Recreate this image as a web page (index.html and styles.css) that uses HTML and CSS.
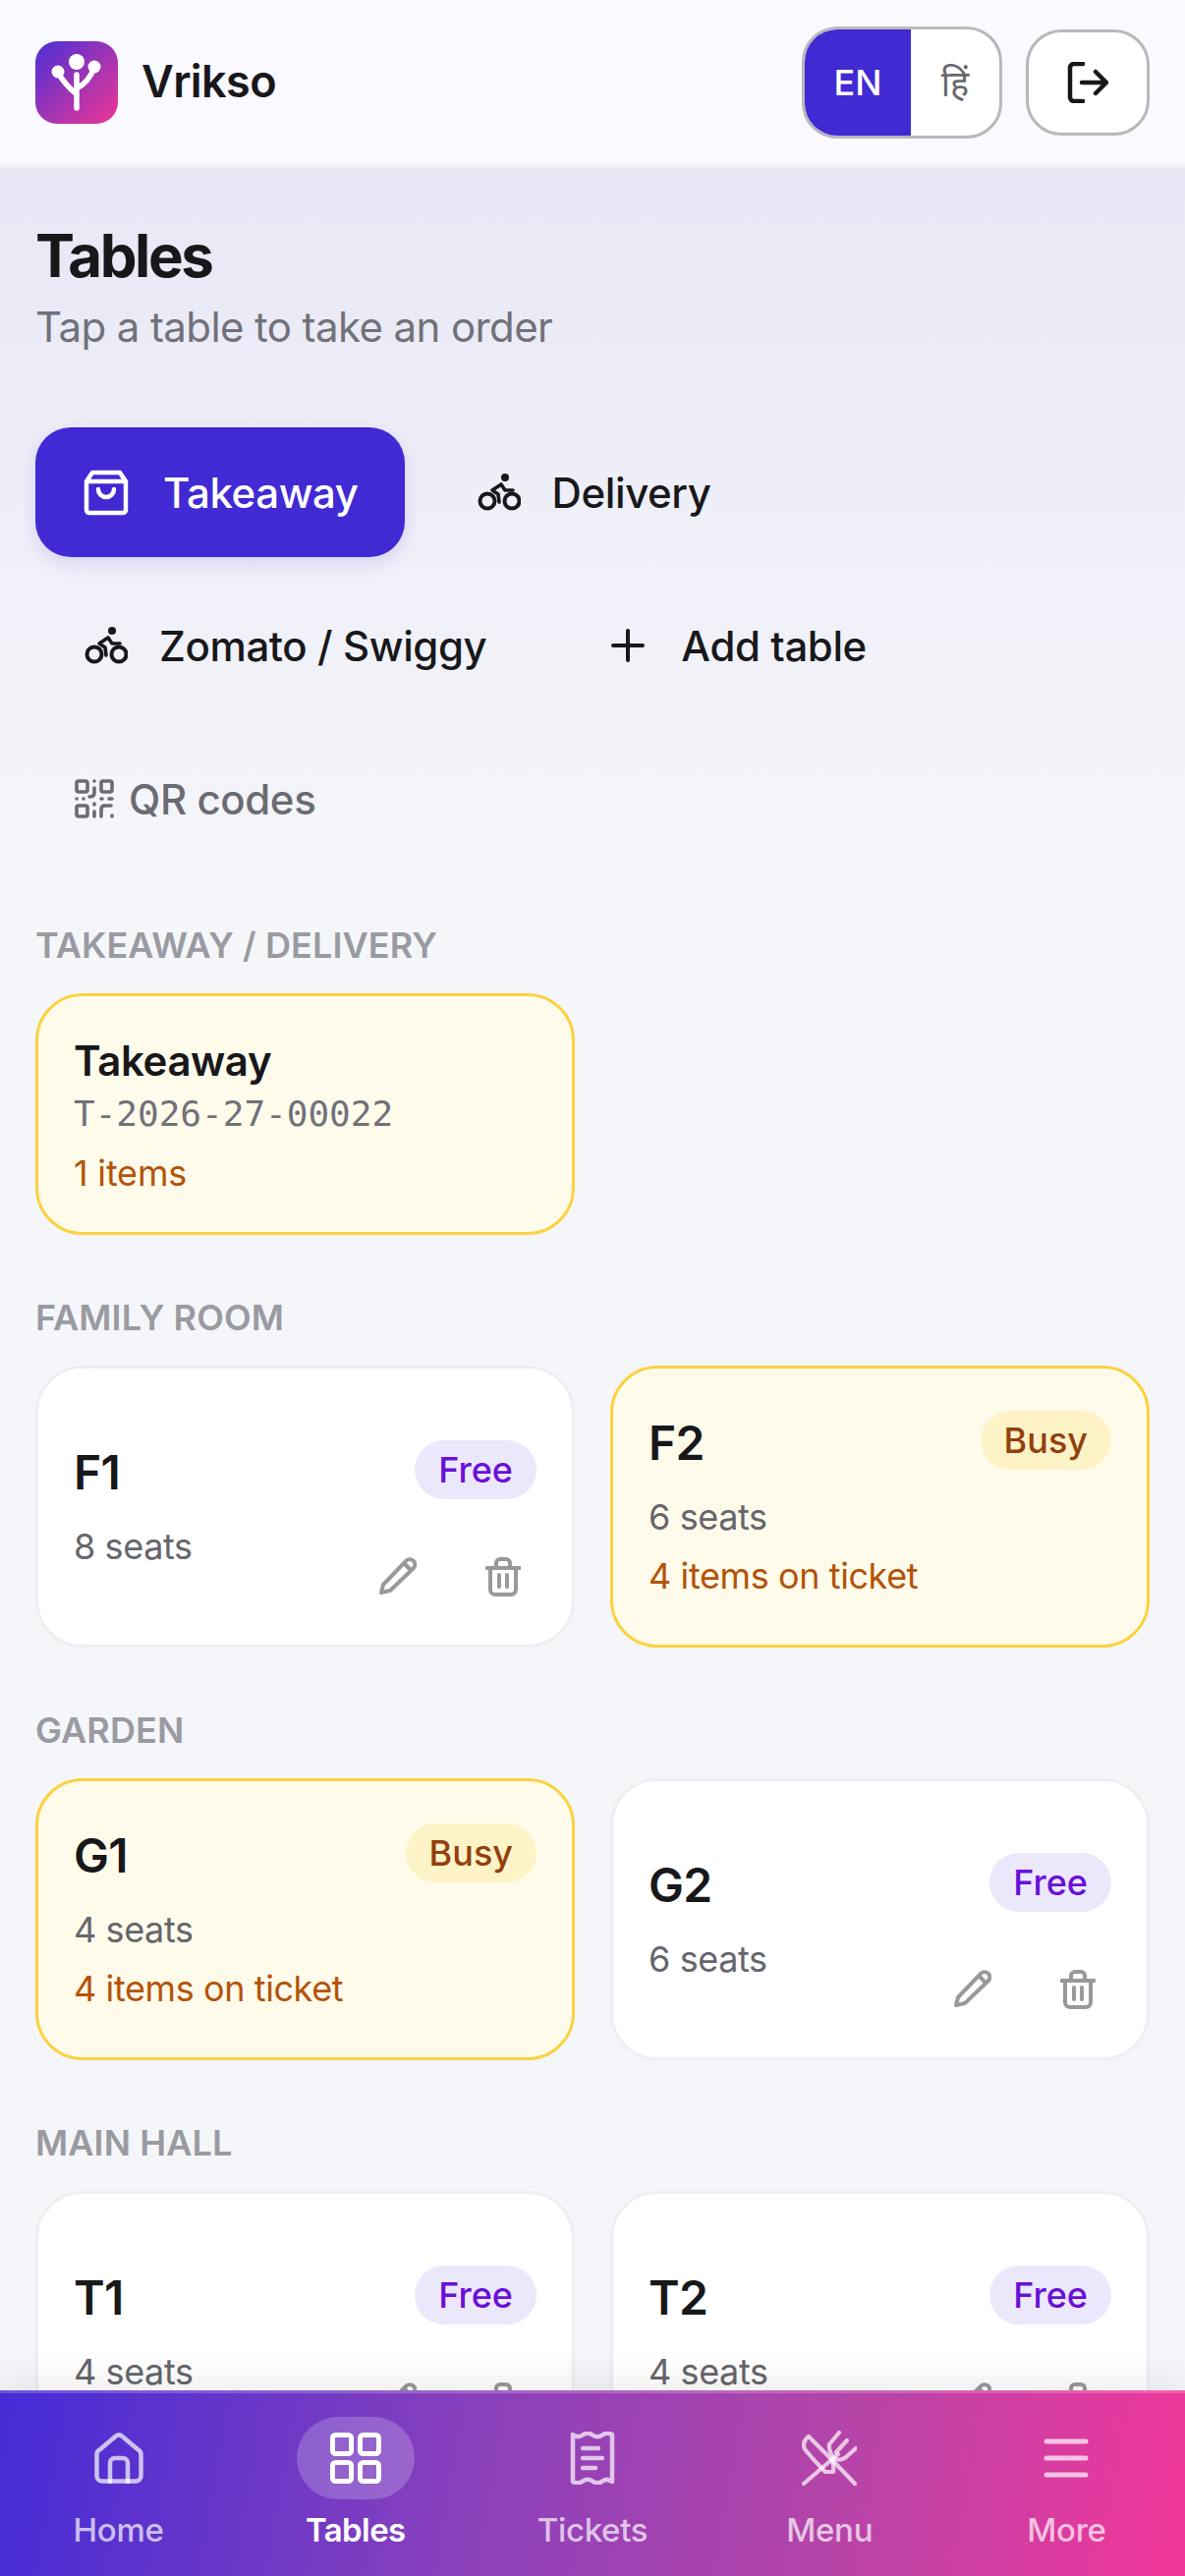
FILE: index.html
```html
<!DOCTYPE html>
<html lang="en">
<head>
    <meta charset="UTF-8">
    <meta name="viewport" content="width=device-width, initial-scale=1.0">
    <title>Vrikso - Tables</title>
    <link rel="stylesheet" href="styles.css">
</head>
<body>
    <svg class="defs" width="0" height="0">
        <symbol id="bike" viewBox="0 0 44 38">
            <circle cx="10" cy="28" r="7.5" fill="none" stroke="currentColor" stroke-width="4"/>
            <circle cx="35" cy="28" r="7.5" fill="none" stroke="currentColor" stroke-width="4"/>
            <circle cx="28" cy="4" r="4" fill="currentColor"/>
            <path d="M22 29 L21 21 L15 17 L24 11 L28 17 H36" fill="none" stroke="currentColor" stroke-width="3.6" stroke-linecap="round" stroke-linejoin="round"/>
        </symbol>
        <symbol id="pencil" viewBox="0 0 38 38">
            <path d="M2 36 L4 28 L27 4 A5 5 0 0 1 35 11 L11 34 Z" fill="none" stroke="currentColor" stroke-width="4" stroke-linejoin="round"/>
            <path d="M25 6 L33 14" fill="none" stroke="currentColor" stroke-width="4"/>
        </symbol>
        <symbol id="trash" viewBox="0 0 36 40">
            <path d="M1 11 H35 M11 11 V6 A4 4 0 0 1 15 2 H21 A4 4 0 0 1 25 6 V11 M5 11 V33 A5 5 0 0 0 10 38 H26 A5 5 0 0 0 31 33 V11 M14 18 V30 M22 18 V30" fill="none" stroke="currentColor" stroke-width="4" stroke-linecap="round"/>
        </symbol>
    </svg>

    <header class="topbar">
        <div class="brand">
            <svg class="logo" viewBox="0 0 84 84">
                <defs>
                    <linearGradient id="logoGrad" x1="0" y1="0" x2="1" y2="1">
                        <stop offset="0" stop-color="#4a30d6"/>
                        <stop offset="1" stop-color="#ef3794"/>
                    </linearGradient>
                </defs>
                <rect width="84" height="84" rx="22" fill="url(#logoGrad)"/>
                <circle cx="42" cy="21" r="8" fill="#fff"/>
                <circle cx="23" cy="31" r="6.5" fill="#fff"/>
                <circle cx="60" cy="26" r="6.5" fill="#fff"/>
                <path d="M42 34 V68 M23 32 Q30 44 42 54 M60 27 Q54 42 42 48" fill="none" stroke="#fff" stroke-width="5.5" stroke-linecap="round"/>
            </svg>
            <span class="brand-name">Vrikso</span>
        </div>
        <div class="top-actions">
            <div class="lang">
                <span class="lang-en">EN</span>
                <span class="lang-hi">हिं</span>
            </div>
            <button class="logout">
                <svg width="42" height="42" viewBox="0 0 42 42" fill="none" stroke="#18181b" stroke-width="4.5" stroke-linecap="round" stroke-linejoin="round">
                    <path d="M16 2 H7 A4 4 0 0 0 3 6 V36 A4 4 0 0 0 7 40 H16 M15 21 H40 M29 10 L40 21 L29 32"/>
                </svg>
            </button>
        </div>
    </header>

    <main class="content">
        <h1 class="title">Tables</h1>
        <p class="subtitle">Tap a table to take an order</p>

        <div class="actions">
            <button class="act act-primary">
                <svg class="act-icon" viewBox="0 0 60 60" fill="none" stroke="#fff" stroke-width="4.5" stroke-linecap="round" stroke-linejoin="round">
                    <path d="M16 10 H44 L50 19 V48 A3 3 0 0 1 47 51 H13 A3 3 0 0 1 10 48 V19 Z M10 19 H50 M22 27 A8 8 0 0 0 38 27"/>
                </svg>
                Takeaway
            </button>
            <button class="act">
                <svg class="act-icon"><use href="#bike" x="8" y="11" width="44" height="38"/></svg>
                Delivery
            </button>
            <button class="act">
                <svg class="act-icon"><use href="#bike" x="8" y="11" width="44" height="38"/></svg>
                Zomato / Swiggy
            </button>
            <button class="act">
                <svg class="act-icon" viewBox="0 0 60 60" fill="none" stroke="#18181b" stroke-width="4" stroke-linecap="round">
                    <path d="M30 15 V45 M15 30 H45"/>
                </svg>
                Add table
            </button>
            <button class="act act-muted">
                <svg class="qr-icon" viewBox="0 0 40 40" fill="none" stroke="#6b6b72" stroke-width="3.6" stroke-linecap="round" stroke-linejoin="round">
                    <rect x="2" y="2" width="11" height="11" rx="2"/>
                    <rect x="27" y="2" width="11" height="11" rx="2"/>
                    <rect x="2" y="27" width="11" height="11" rx="2"/>
                    <path d="M20 2 V2.1 M20 9 V14 Q20 18 15 18 M2 20 H2.1 M9 20 H9.1 M27 20 H28 M35 20 H38 M20 25 V26 M20 33 V38 M27 38 V31 Q27 27 31 27 H37 M38 37 V38"/>
                </svg>
                QR codes
            </button>
        </div>

        <section class="group">
            <h2 class="group-label">TAKEAWAY / DELIVERY</h2>
            <div class="grid">
                <div class="card busy ticket">
                    <div class="ticket-name">Takeaway</div>
                    <div class="ticket-code">T-2026-27-00022</div>
                    <div class="ticket-items">1 items</div>
                </div>
            </div>
        </section>

        <section class="group">
            <h2 class="group-label">FAMILY ROOM</h2>
            <div class="grid">
                <div class="card free">
                    <div class="card-head"><span class="table-name">F1</span><span class="badge badge-free">Free</span></div>
                    <div class="seats">8 seats</div>
                    <div class="card-tools">
                        <svg class="tool-pencil"><use href="#pencil"/></svg>
                        <svg class="tool-trash"><use href="#trash"/></svg>
                    </div>
                </div>
                <div class="card busy">
                    <div class="card-head"><span class="table-name">F2</span><span class="badge badge-busy">Busy</span></div>
                    <div class="seats">6 seats</div>
                    <div class="on-ticket">4 items on ticket</div>
                </div>
            </div>
        </section>

        <section class="group">
            <h2 class="group-label">GARDEN</h2>
            <div class="grid">
                <div class="card busy">
                    <div class="card-head"><span class="table-name">G1</span><span class="badge badge-busy">Busy</span></div>
                    <div class="seats">4 seats</div>
                    <div class="on-ticket">4 items on ticket</div>
                </div>
                <div class="card free">
                    <div class="card-head"><span class="table-name">G2</span><span class="badge badge-free">Free</span></div>
                    <div class="seats">6 seats</div>
                    <div class="card-tools">
                        <svg class="tool-pencil"><use href="#pencil"/></svg>
                        <svg class="tool-trash"><use href="#trash"/></svg>
                    </div>
                </div>
            </div>
        </section>

        <section class="group">
            <h2 class="group-label">MAIN HALL</h2>
            <div class="grid">
                <div class="card free">
                    <div class="card-head"><span class="table-name">T1</span><span class="badge badge-free">Free</span></div>
                    <div class="seats">4 seats</div>
                    <div class="card-tools">
                        <svg class="tool-pencil"><use href="#pencil"/></svg>
                        <svg class="tool-trash"><use href="#trash"/></svg>
                    </div>
                </div>
                <div class="card free">
                    <div class="card-head"><span class="table-name">T2</span><span class="badge badge-free">Free</span></div>
                    <div class="seats">4 seats</div>
                    <div class="card-tools">
                        <svg class="tool-pencil"><use href="#pencil"/></svg>
                        <svg class="tool-trash"><use href="#trash"/></svg>
                    </div>
                </div>
            </div>
        </section>
    </main>

    <nav class="bottom-nav">
        <a class="nav-item">
            <span class="nav-icon">
                <svg width="50" height="52" viewBox="0 0 50 52" fill="none" stroke-width="4.5" stroke-linecap="round" stroke-linejoin="round">
                    <path d="M22 3.5 A5 5 0 0 1 28 3.5 L44 17 A6 6 0 0 1 47.5 22 V44 A5.5 5.5 0 0 1 42 49.5 H8 A5.5 5.5 0 0 1 2.5 44 V22 A6 6 0 0 1 6 17 Z"/>
                    <path d="M16 51 V31 A5 5 0 0 1 21 26 H29 A5 5 0 0 1 34 31 V51"/>
                </svg>
            </span>
            Home
        </a>
        <a class="nav-item active">
            <span class="nav-icon">
                <svg width="52" height="52" viewBox="0 0 52 52" fill="none" stroke-width="5">
                    <rect x="2.5" y="2.5" width="19" height="19" rx="3"/>
                    <rect x="30.5" y="2.5" width="19" height="19" rx="3"/>
                    <rect x="2.5" y="30.5" width="19" height="19" rx="3"/>
                    <rect x="30.5" y="30.5" width="19" height="19" rx="3"/>
                </svg>
            </span>
            Tables
        </a>
        <a class="nav-item">
            <span class="nav-icon">
                <svg width="46" height="54" viewBox="0 0 46 54" fill="none" stroke-width="4.5" stroke-linecap="round" stroke-linejoin="round">
                    <path d="M3 3 Q8 7 13 3.5 T23 3.5 T33 3.5 T43 3 V51 Q38 47 33 50.5 T23 50.5 T13 50.5 T3 51 Z"/>
                    <path d="M13 17 H29 M13 27 H33 M13 37 H26"/>
                </svg>
            </span>
            Tickets
        </a>
        <a class="nav-item">
            <span class="nav-icon">
                <svg width="56" height="56" viewBox="0 0 56 56" fill="none" stroke-width="4.2" stroke-linecap="round" stroke-linejoin="round">
                    <path d="M7 6 L30 29 Q33 34 32 42 H24 Q12 30 3 19 Q0 11 7 6 Z"/>
                    <path d="M31 30 L54 54"/>
                    <path d="M2 54 L37 24"/>
                    <path d="M38 2 L28 14 Q27 22 34 29 Q40 31 45 27 L55 18"/>
                    <path d="M46 10 L35 22"/>
                </svg>
            </span>
            Menu
        </a>
        <a class="nav-item">
            <span class="nav-icon">
                <svg width="46" height="42" viewBox="0 0 46 42" fill="none" stroke-width="5" stroke-linecap="round">
                    <path d="M3 4 H43 M3 21 H43 M3 38 H43"/>
                </svg>
            </span>
            More
        </a>
    </nav>
</body>
</html>
```

FILE: styles.css
```css
* {
    box-sizing: border-box;
}
html, body {
    margin: 0;
    height: 2622px;
    overflow: hidden;
}
body {
    position: relative;
    font-family: Inter, "Noto Sans", sans-serif;
    color: #18181b;
    background: #f5f6fa;
}
.defs {
    position: absolute;
}

/* top bar */
.topbar {
    height: 171px;
    padding: 0 36px;
    display: flex;
    align-items: center;
    justify-content: space-between;
    background: #f9f9ff;
    border-bottom: 3px solid #f0f0f6;
}
.brand {
    display: flex;
    align-items: center;
    gap: 24px;
}
.logo {
    width: 84px;
    height: 84px;
}
.brand-name {
    font-size: 45px;
    font-weight: 600;
    letter-spacing: -0.6px;
    margin-top: -3px;
}
.top-actions {
    display: flex;
    align-items: center;
    gap: 24px;
}
.lang {
    width: 204px;
    height: 114px;
    display: flex;
    border: 3px solid #b8b8ba;
    border-radius: 36px;
    background: #fff;
    overflow: hidden;
    font-size: 36px;
}
.lang-en {
    width: 108px;
    background: #4129d4;
    color: #fff;
    font-weight: 500;
    display: flex;
    align-items: center;
    justify-content: center;
}
.lang-hi {
    flex: 1;
    color: #66666c;
    display: flex;
    align-items: center;
    justify-content: center;
}
.logout {
    width: 126px;
    height: 108px;
    padding: 0;
    border: 3px solid #b8b8ba;
    border-radius: 36px;
    background: #fff;
    display: flex;
    align-items: center;
    justify-content: center;
}

/* page */
.content {
    padding: 53px 36px 0;
    background: linear-gradient(180deg, #e8e8f6 0, #f5f6fa 700px);
}
.title {
    margin: 0;
    font-size: 60px;
    line-height: 72px;
    font-weight: 700;
    letter-spacing: -2.4px;
}
.subtitle {
    margin: 10px 0 0;
    font-size: 42px;
    line-height: 54px;
    letter-spacing: -0.6px;
    color: #71717a;
}
.actions {
    margin: 75px 0 -1px;
    display: flex;
    flex-wrap: wrap;
    gap: 24px;
}
.act {
    height: 132px;
    padding: 0 48px 0 42px;
    display: flex;
    align-items: center;
    gap: 24px;
    border: 0;
    border-radius: 36px;
    background: transparent;
    color: #18181b;
    font-family: inherit;
    font-size: 42px;
    font-weight: 500;
    letter-spacing: -0.4px;
}
.act-icon {
    width: 60px;
    height: 60px;
}
.act-primary {
    padding-right: 47px;
    background: #4129d4;
    color: #fff;
    gap: 28px;
    box-shadow: 0 6px 18px rgba(65, 41, 212, 0.15);
}
.act-muted {
    padding-left: 40px;
    gap: 15px;
    color: #6b6b72;
}
.qr-icon {
    width: 40px;
    height: 40px;
}

/* table groups */
.group {
    margin-top: 60px;
}
.group-label {
    margin: 0 0 25px;
    font-size: 36px;
    line-height: 48px;
    font-weight: 600;
    letter-spacing: 0.1px;
    color: #9a9aa1;
}
.grid {
    display: grid;
    grid-template-columns: 549px 549px;
    gap: 36px;
}
.card {
    position: relative;
    height: 287px;
    padding: 42px 36px;
    border: 3px solid #eeeff3;
    border-radius: 48px;
    background: #fff;
    display: flex;
    flex-direction: column;
    justify-content: center;
}
.card.busy {
    border-color: #fbd23f;
    background: #fffbeb;
}
.card-head {
    display: flex;
    align-items: flex-start;
    justify-content: space-between;
}
.table-name {
    font-size: 48px;
    line-height: 66px;
    font-weight: 600;
    letter-spacing: -0.6px;
}
.badge {
    height: 60px;
    padding: 0 24px;
    border-radius: 30px;
    display: flex;
    align-items: center;
    font-size: 36px;
    font-weight: 500;
}
.badge-free {
    background: #ece8fc;
    color: #6a10d8;
}
.badge-busy {
    background: #fef3c7;
    color: #92400e;
}
.seats {
    margin-top: 15px;
    font-size: 36px;
    line-height: 54px;
    letter-spacing: -0.4px;
    color: #66666c;
}
.on-ticket {
    margin-top: 6px;
    font-size: 36px;
    line-height: 54px;
    letter-spacing: -0.4px;
    color: #b45309;
}
.card-tools {
    position: absolute;
    right: 52px;
    bottom: 49px;
    display: flex;
    gap: 70px;
    color: #999;
}
.tool-pencil {
    width: 38px;
    height: 38px;
}
.tool-trash {
    width: 36px;
    height: 40px;
}
.ticket {
    height: 246px;
    padding-top: 48px;
}
.ticket-name {
    font-size: 42px;
    line-height: 54px;
    font-weight: 600;
    letter-spacing: -0.4px;
}
.ticket-code {
    font-family: "DejaVu Sans Mono", monospace;
    font-size: 36px;
    line-height: 54px;
    color: #71717a;
}
.ticket-items {
    margin-top: 6px;
    font-size: 36px;
    line-height: 54px;
    letter-spacing: -0.2px;
    color: #b45309;
}

/* bottom nav */
.bottom-nav {
    position: absolute;
    left: 0;
    right: 0;
    bottom: 0;
    height: 189px;
    display: flex;
    padding-top: 24px;
    background: linear-gradient(100deg, #452bd6 0, #8a41bc 40%, #b544a8 70%, #f2369a 100%);
    border-top: 3px solid rgba(255, 255, 255, 0.2);
    box-shadow: 0 -12px 36px rgba(0, 0, 0, 0.07);
}
.nav-item {
    flex: 1;
    display: flex;
    flex-direction: column;
    align-items: center;
    gap: 10px;
    font-size: 33px;
    line-height: 42px;
    font-weight: 500;
    letter-spacing: -0.3px;
    color: rgba(255, 255, 255, 0.7);
}
.nav-icon {
    width: 120px;
    height: 84px;
    border-radius: 42px;
    display: flex;
    align-items: center;
    justify-content: center;
}
.nav-icon svg {
    stroke: rgba(255, 255, 255, 0.7);
}
.nav-item.active {
    color: #fff;
    font-weight: 600;
    letter-spacing: -0.6px;
}
.nav-item.active .nav-icon {
    background: rgba(255, 255, 255, 0.2);
}
.nav-item.active .nav-icon svg {
    stroke: #fff;
}
```
